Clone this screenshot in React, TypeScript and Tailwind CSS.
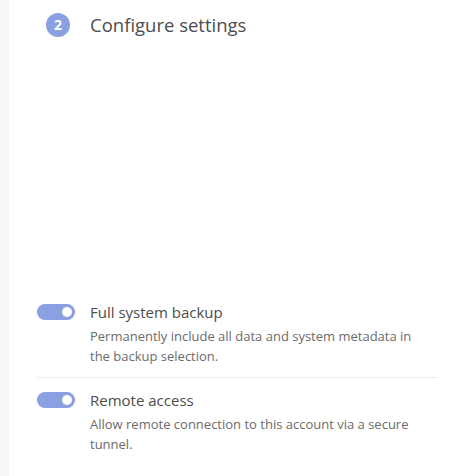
const settings = [
  {
    title: 'Full system backup',
    description: 'Permanently include all data and system metadata in the backup selection.',
  },
  {
    title: 'Remote access',
    description: 'Allow remote connection to this account via a secure tunnel.',
  },
]

const Toggle: React.FC = () => (
  <div className="w-[38px] h-[16px] rounded-full bg-[#8aa0e0] flex items-center justify-end pr-[3px] shrink-0">
    <div className="w-[10px] h-[10px] rounded-full bg-white"></div>
  </div>
)

export default function App() {
  return (
    <div className="flex h-[476px] bg-white" style={{ fontFamily: '"Open Sans", "Liberation Sans", sans-serif' }}>
      <div className="w-[9px] bg-[#f7f7f7] shrink-0"></div>
      <div className="flex-1 flex flex-col">
        <div className="flex items-center pt-[11px] pl-[37px]">
          <div className="w-[24px] h-[24px] rounded-full bg-[#8aa0e0] text-white text-[14px] font-bold flex items-center justify-center">
            2
          </div>
          <h2 className="ml-[20px] text-[18.5px] text-[#4d4d4d]">Configure settings</h2>
        </div>

        <div className="mt-auto pb-[22px] pl-[28px] pr-[19px]">
          {settings.map((s, i) => (
            <div
              key={i}
              className={`flex gap-[15px] ${i === 0 ? 'pb-[11px] border-b border-[#ececec]' : 'pt-[8px]'}`}
            >
              <div className="pt-[6px]">
                <Toggle />
              </div>
              <div>
                <h3 className="text-[15px] leading-[28px] text-[#4d4d4d]">{s.title}</h3>
                <p className="text-[13px] leading-[20px] text-[#6b6b6b] max-w-[330px]">{s.description}</p>
              </div>
            </div>
          ))}
        </div>
      </div>
    </div>
  )
}
